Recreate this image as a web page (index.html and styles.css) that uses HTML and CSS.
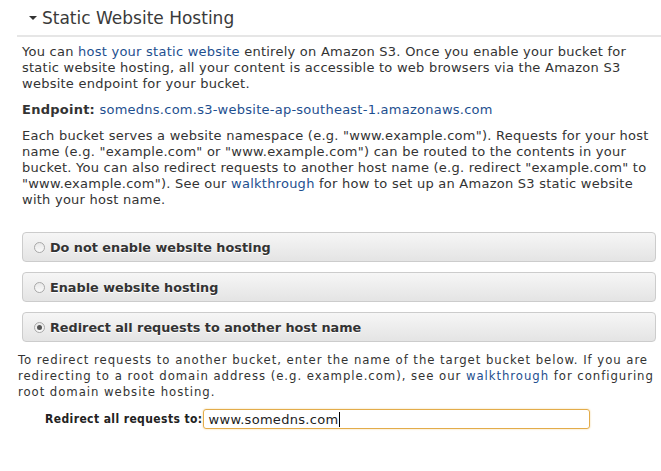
FILE: index.html
```html
<!DOCTYPE html>
<html>
<head>
<meta charset="utf-8">
<link rel="stylesheet" href="styles.css">
</head>
<body>
<div class="panel">
  <div class="header">
    <span class="caret"></span>
    <span class="title">Static Website Hosting</span>
  </div>
  <div class="content">
    <p class="para">You can <a href="#">host your static website</a> entirely on Amazon S3. Once you enable your bucket for<br>static website hosting, all your content is accessible to web browsers via the Amazon S3<br>website endpoint for your bucket.</p>
    <p class="para endpoint"><b>Endpoint:</b> <a href="#">somedns.com.s3-website-ap-southeast-1.amazonaws.com</a></p>
    <p class="para">Each bucket serves a website namespace (e.g. "www.example.com"). Requests for your host<br>name (e.g. "example.com" or "www.example.com") can be routed to the contents in your<br>bucket. You can also redirect requests to another host name (e.g. redirect "example.com" to<br>"www.example.com"). See our <a href="#">walkthrough</a> for how to set up an Amazon S3 static website<br>with your host name.</p>
    <div class="options">
      <label class="option"><span class="radio"></span>Do not enable website hosting</label>
      <label class="option"><span class="radio"></span>Enable website hosting</label>
      <label class="option"><span class="radio checked"></span>Redirect all requests to another host name</label>
    </div>
  </div>
  <div class="redirect">
    <p class="note">To redirect requests to another bucket, enter the name of the target bucket below. If you are<br>redirecting to a root domain address (e.g. example.com), see our <a href="#">walkthrough</a> for configuring<br>root domain website hosting.</p>
    <div class="field">
      <span class="field-label">Redirect all requests to:</span>
      <div class="input"><span class="value">www.somedns.com</span><span class="cursor"></span></div>
    </div>
  </div>
</div>
</body>
</html>
```
FILE: styles.css
```css
html, body {
  margin: 0;
  padding: 0;
  background: #ffffff;
}
body {
  font-family: "DejaVu Sans", Verdana, sans-serif;
  color: #333333;
  width: 661px;
  height: 471px;
  overflow: hidden;
}
a {
  color: #1e4f8f;
  text-decoration: none;
}
.panel {
  padding-left: 17px;
}
.header {
  display: flex;
  align-items: center;
  height: 37px;
  border-bottom: 2px solid #e6e6e6;
  box-sizing: border-box;
}
.caret {
  width: 0;
  height: 0;
  border-left: 4px solid transparent;
  border-right: 4px solid transparent;
  border-top: 4px solid #333;
  margin-left: 12px;
  margin-right: 5px;
  margin-top: 1px;
}
.title {
  font-size: 17px;
  color: #3a3a3a;
}
.content {
  padding: 0 5px;
}
.para {
  font-size: 13px;
  letter-spacing: 0.25px;
  line-height: 16px;
  margin: 7px 0 0 0;
  color: #333;
  white-space: nowrap;
}
.para + .para {
  margin-top: 10px;
}
.options {
  margin-top: 24px;
  display: flex;
  flex-direction: column;
  gap: 10px;
}
.option {
  display: flex;
  align-items: center;
  height: 30px;
  box-sizing: border-box;
  border: 1px solid #cccccc;
  border-radius: 4px;
  background: linear-gradient(#f6f6f6, #e4e4e4);
  font-weight: bold;
  font-size: 12.8px;
  color: #333;
  text-shadow: 0 1px 0 #ffffff;
  padding-left: 11px;
}
.radio {
  width: 9px;
  height: 9px;
  border-radius: 50%;
  border: 1px solid #a8a8a8;
  background: linear-gradient(#e8e8e8, #fafafa);
  margin-right: 5px;
  position: relative;
  flex: none;
}
.radio.checked::after {
  content: "";
  position: absolute;
  left: 2px;
  top: 2px;
  width: 5px;
  height: 5px;
  border-radius: 50%;
  background: #555;
}
.redirect {
  padding-left: 1px;
}
.note {
  font-family: "DejaVu Sans Condensed", Tahoma, sans-serif;
  font-size: 13px;
  letter-spacing: 0.95px;
  line-height: 16px;
  margin: 10px 0 0 0;
  color: #333;
  white-space: nowrap;
}
.field {
  display: flex;
  align-items: center;
  margin-top: 9px;
  padding-left: 27px;
}
.field-label {
  font-family: "DejaVu Sans Condensed", Tahoma, sans-serif;
  font-weight: bold;
  font-size: 12px;
  letter-spacing: 0.4px;
  color: #222;
}
.input {
  display: flex;
  align-items: center;
  width: 387px;
  height: 20px;
  box-sizing: border-box;
  border: 1px solid #e3ac4a;
  border-radius: 3px;
  box-shadow: 0 0 2px #f0d090;
  padding-left: 5px;
  font-size: 13px;
  letter-spacing: 0.3px;
  color: #222;
}
.cursor {
  width: 1px;
  height: 15px;
  background: #000;
  margin-left: 1px;
}
```
